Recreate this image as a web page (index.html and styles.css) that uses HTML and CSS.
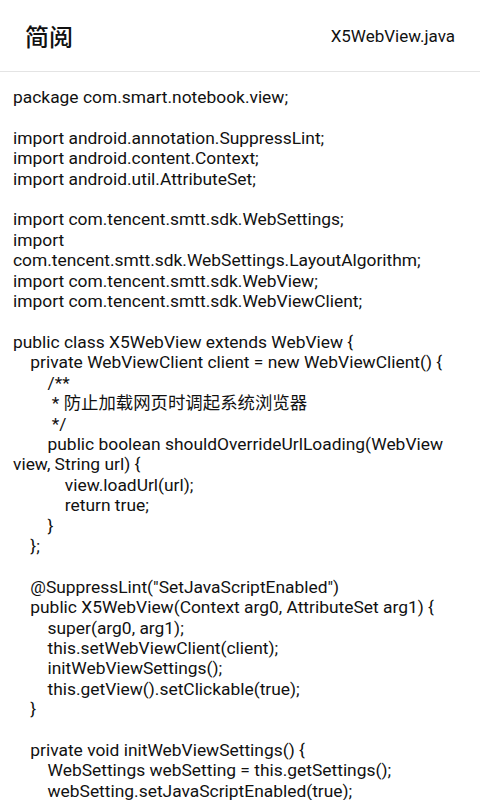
FILE: index.html
```html
<!DOCTYPE html>
<html lang="zh">
<head>
<meta charset="utf-8">
<title>简阅</title>
<link rel="stylesheet" href="styles.css">
</head>
<body>
<header class="bar">
  <h1 class="app-title">简阅</h1>
  <span class="file-name">X5WebView.java</span>
</header>
<main class="content">
<pre class="code">package com.smart.notebook.view;

import android.annotation.SuppressLint;
import android.content.Context;
import android.util.AttributeSet;

import com.tencent.smtt.sdk.WebSettings;
import com.tencent.smtt.sdk.WebSettings.LayoutAlgorithm;
import com.tencent.smtt.sdk.WebView;
import com.tencent.smtt.sdk.WebViewClient;

public class X5WebView extends WebView {
    private WebViewClient client = new WebViewClient() {
        /**
         * 防止加载网页时调起系统浏览器
         */
        public boolean shouldOverrideUrlLoading(WebView view, String url) {
            view.loadUrl(url);
            return true;
        }
    };

    @SuppressLint("SetJavaScriptEnabled")
    public X5WebView(Context arg0, AttributeSet arg1) {
        super(arg0, arg1);
        this.setWebViewClient(client);
        initWebViewSettings();
        this.getView().setClickable(true);
    }

    private void initWebViewSettings() {
        WebSettings webSetting = this.getSettings();
        webSetting.setJavaScriptEnabled(true);
        webSetting.setJavaScriptCanOpenWindowsAutomatically(true);
        webSetting.setAllowFileAccess(true);
    }
}</pre>
</main>
</body>
</html>
```
FILE: styles.css
```css
* { box-sizing: border-box; }
html, body {
  margin: 0;
  padding: 0;
  background: #ffffff;
  width: 480px;
  height: 800px;
  overflow: hidden;
}
body {
  font-family: Roboto, "Noto Sans CJK SC", sans-serif;
  color: #111111;
}
.bar {
  height: 72px;
  border-bottom: 1px solid #e4e4e4;
  display: flex;
  align-items: center;
  justify-content: space-between;
  padding: 0 25px 0 25px;
}
.app-title {
  margin: 0;
  font-family: "Noto Sans CJK SC", sans-serif;
  font-weight: 500;
  font-size: 24px;
  color: #111111;
  line-height: 1;
  padding-top: 1px;
}
.file-name {
  font-size: 17px;
  color: #111111;
  padding-top: 1px;
}
.content {
  padding: 15px 13px 0 13px;
}
.code {
  margin: 0;
  font-family: Roboto, "Noto Sans CJK SC", sans-serif;
  font-size: 17.4px;
  line-height: 20.4px;
  white-space: pre-wrap;
  word-wrap: break-word;
  color: #111111;
}
```
